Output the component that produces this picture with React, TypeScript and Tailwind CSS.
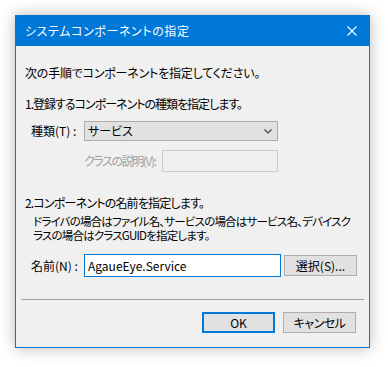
const font = {
  fontFamily: '"Noto Sans CJK JP", "Noto Sans", sans-serif',
};

export default function App() {
  return (
    <div
      className="w-[388px] h-[367px] bg-white pt-[15px] pl-[15px] text-[12px] text-black [font-feature-settings:'palt']"
      style={font}
    >
      <div className="w-[355px] h-[333px] flex flex-col bg-[#f0f0f0] border border-[#0078d7] shadow-[0_0_14px_rgba(0,0,0,0.28)]">
        {/* Title bar */}
        <div className="h-[30px] shrink-0 bg-[#0078d7] flex items-center justify-between pl-[9px] pr-[12px] text-white">
          <span className="leading-[16px] tracking-[0.6px]">システムコンポーネントの指定</span>
          <svg width="10" height="10" viewBox="0 0 10 10" className="shrink-0">
            <path d="M0.5 0.5 L9.5 9.5 M9.5 0.5 L0.5 9.5" stroke="white" strokeWidth="1.1" />
          </svg>
        </div>

        <div className="flex flex-col px-[9px] whitespace-nowrap">
          <p className="mt-[19px] leading-[16px] tracking-[-0.2px]">次の手順でコンポーネントを指定してください。</p>

          <p className="mt-[15px] leading-[16px] tracking-[-1px]">1.登録するコンポーネントの種類を指定します。</p>

          <div className="mt-[9px] flex items-center">
            <span className="w-[59px] pl-[6px] leading-[16px]">種類(T) :</span>
            <div className="w-[194px] h-[20px] bg-[#e1e1e1] border border-[#adadad] flex items-center justify-between pl-[3px] pr-[5px]">
              <span className="leading-[16px]">サービス</span>
              <svg width="8" height="5" viewBox="0 0 8 5">
                <path d="M0.5 0.5 L4 4 L7.5 0.5" fill="none" stroke="#404040" strokeWidth="1.2" />
              </svg>
            </div>
          </div>

          <div className="mt-[9px] flex items-center pl-[59px]">
            <span className="w-[78px] leading-[16px] text-[#a0a0a0] tracking-[-1.4px]">クラスの説明(V):</span>
            <div className="w-[116px] h-[22px] bg-[#f0f0f0] border border-[#cccccc]" />
          </div>

          <p className="mt-[23px] leading-[16px] tracking-[-0.8px]">2.コンポーネントの名前を指定します。</p>
          <div className="mt-[3px] pl-[8px] text-[11.5px] leading-[14px] tracking-[-0.8px] flex flex-col">
            <span>ドライバの場合はファイル名、サービスの場合はサービス名、デバイスク</span>
            <span>ラスの場合はクラスGUIDを指定します。</span>
          </div>

          <div className="mt-[12px] flex items-center">
            <span className="w-[59px] pl-[6px] leading-[16px]">名前(N) :</span>
            <div className="w-[197px] h-[23px] bg-white border border-[#0078d7] flex items-center pl-[3px]">
              <span className="leading-[16px]">AgaueEye.Service</span>
            </div>
            <button className="ml-[3px] w-[73px] h-[21px] bg-[#e1e1e1] border border-[#adadad] flex items-center justify-center leading-[16px]">
              選択(S)...
            </button>
          </div>
        </div>

        <div className="mt-[22px] mx-[5px] h-px bg-[#a0a0a0]" />

        <div className="mt-[12px] flex justify-end gap-[8px] pr-[13px]">
          <button className="w-[73px] h-[21px] bg-[#e1e1e1] border-2 border-[#0078d7] flex items-center justify-center leading-[16px]">
            OK
          </button>
          <button className="w-[73px] h-[21px] bg-[#e1e1e1] border border-[#adadad] flex items-center justify-center leading-[16px] tracking-[-0.5px]">
            キャンセル
          </button>
        </div>
      </div>
    </div>
  );
}
